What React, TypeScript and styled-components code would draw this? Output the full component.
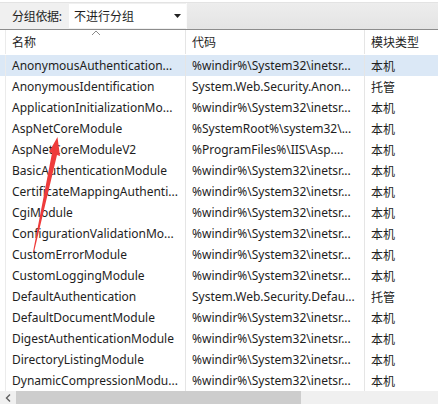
import React from "react";
import styled, { createGlobalStyle } from "styled-components";

const Global = createGlobalStyle`
  html, body { margin: 0; padding: 0; background: #ffffff; }
  body { width: 438px; height: 404px; overflow: hidden; }
`;

const FONT = `"Noto Sans", "Noto Sans CJK SC", sans-serif`;

const Page = styled.div`
  position: relative;
  width: 438px;
  height: 404px;
  overflow: hidden;
  display: flex;
  flex-direction: column;
  font-family: ${FONT};
  font-size: 12px;
  color: #1e1e1e;
  background: #fff;
`;

const Toolbar = styled.div`
  margin-top: 2px;
  height: 26px;
  border-top: 1px solid #e3e3e3;
  border-bottom: 1px solid #8c8c8c;
  background: #f0f0f0;
  display: flex;
  align-items: center;
`;

const Label = styled.span`
  padding-left: 12px;
  flex: 0 0 69px;
  box-sizing: border-box;
  white-space: nowrap;
  letter-spacing: -0.3px;
`;

const Combo = styled.div`
  width: 117px;
  height: 24px;
  background: #fff;
  display: flex;
  align-items: center;
  justify-content: space-between;
  padding: 0 5px 0 5px;
  box-sizing: border-box;
`;

const ToolbarRest = styled.div`
  flex: 1;
  align-self: stretch;
  border-left: 1px solid #fbfbfb;
  background: linear-gradient(#ededed, #e4e4e4);
`;

const Grid = styled.div`
  display: grid;
  grid-template-columns: 6px 180px 179px 1fr;
`;

const Header = styled(Grid)`
  height: 24px;
  position: relative;
`;

const Row = styled(Grid)<{ $sel?: boolean }>`
  height: 21px;
  background: ${(p) => (p.$sel ? "#dbe8f6" : "#fff")};
`;

const Gutter = styled.div`
  border-right: 1px solid #ebebeb;
`;

const Cell = styled.div<{ $last?: boolean }>`
  padding-left: 6px;
  display: flex;
  align-items: center;
  white-space: nowrap;
  overflow: hidden;
  border-right: ${(p) => (p.$last ? "none" : "1px solid #e5e5e5")};
`;

const HeadCell = styled(Cell)`
  border-right: ${(p) => (p.$last ? "none" : "1px solid #e5e5e5")};
`;

const SortMark = styled.svg`
  position: absolute;
  left: 91px;
  top: 0px;
`;

const Body = styled.div`
  flex: 1;
  display: flex;
  flex-direction: column;
  padding-top: 1px;
`;

const HScroll = styled.div`
  height: 13px;
  background: #f0f0f0;
  display: flex;
  align-items: center;
`;

const ArrowBtn = styled.div`
  width: 16px;
  height: 100%;
  display: flex;
  align-items: center;
  justify-content: center;
`;

const Thumb = styled.div`
  width: 285px;
  height: 100%;
  background: #cdcdcd;
`;

const RedArrow = styled.svg`
  position: absolute;
  left: 0;
  top: 0;
  pointer-events: none;
`;

const rows: [string, string, string][] = [
  ["AnonymousAuthentication...", "%windir%\\System32\\inetsr...", "本机"],
  ["AnonymousIdentification", "System.Web.Security.Anon...", "托管"],
  ["ApplicationInitializationMo...", "%windir%\\System32\\inetsr...", "本机"],
  ["AspNetCoreModule", "%SystemRoot%\\system32\\...", "本机"],
  ["AspNetCoreModuleV2", "%ProgramFiles%\\IIS\\Asp....", "本机"],
  ["BasicAuthenticationModule", "%windir%\\System32\\inetsr...", "本机"],
  ["CertificateMappingAuthenti...", "%windir%\\System32\\inetsr...", "本机"],
  ["CgiModule", "%windir%\\System32\\inetsr...", "本机"],
  ["ConfigurationValidationMo...", "%windir%\\System32\\inetsr...", "本机"],
  ["CustomErrorModule", "%windir%\\System32\\inetsr...", "本机"],
  ["CustomLoggingModule", "%windir%\\System32\\inetsr...", "本机"],
  ["DefaultAuthentication", "System.Web.Security.Defau...", "托管"],
  ["DefaultDocumentModule", "%windir%\\System32\\inetsr...", "本机"],
  ["DigestAuthenticationModule", "%windir%\\System32\\inetsr...", "本机"],
  ["DirectoryListingModule", "%windir%\\System32\\inetsr...", "本机"],
  ["DynamicCompressionModu...", "%windir%\\System32\\inetsr...", "本机"],
];

export default function App() {
  return (
    <Page>
      <Global />
      <Toolbar>
        <Label>分组依据:</Label>
        <Combo>
          <span>不进行分组</span>
          <svg width="7" height="4" viewBox="0 0 7 4">
            <path d="M0 0 H7 L3.5 4 Z" fill="#222" />
          </svg>
        </Combo>
        <ToolbarRest />
      </Toolbar>
      <Header>
        <Gutter />
        <HeadCell>名称</HeadCell>
        <HeadCell>代码</HeadCell>
        <HeadCell $last>模块类型</HeadCell>
        <SortMark width="10" height="6" viewBox="0 0 10 6">
          <path d="M1 5 L5 1 L9 5" fill="none" stroke="#8a8a8a" strokeWidth="1" />
        </SortMark>
      </Header>
      <Body>
        {rows.map((r, i) => (
          <Row key={i} $sel={i === 0}>
            <Gutter />
            <Cell>{r[0]}</Cell>
            <Cell>{r[1]}</Cell>
            <Cell $last>{r[2]}</Cell>
          </Row>
        ))}
      </Body>
      <HScroll>
        <ArrowBtn>
          <svg width="6" height="8" viewBox="0 0 6 8">
            <path d="M5 0.5 L1.5 4 L5 7.5" fill="none" stroke="#606060" strokeWidth="1.4" />
          </svg>
        </ArrowBtn>
        <Thumb />
      </HScroll>
      <RedArrow width="438" height="404" viewBox="0 0 438 404">
        <path d="M57.5 137 L60 156 L57 155 L34 252 L33 252 L52 153 L49 152 Z" fill="#ee3b3b" />
      </RedArrow>
    </Page>
  );
}
